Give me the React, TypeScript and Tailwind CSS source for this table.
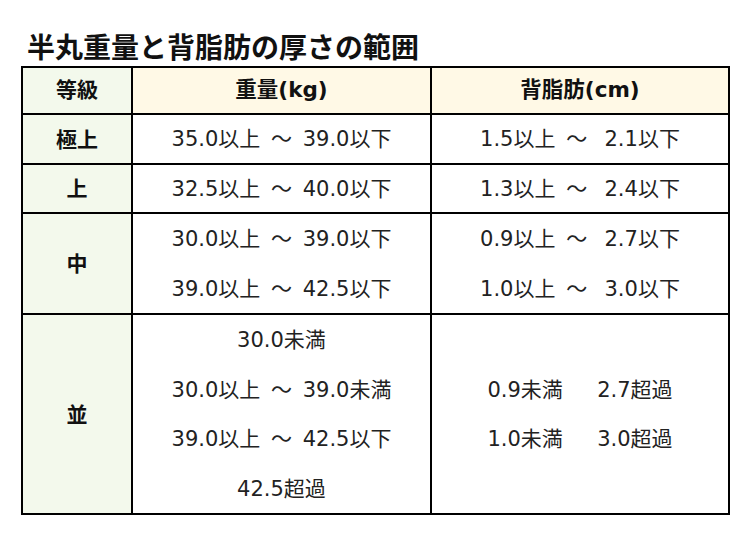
import React from "react";

const font = { fontFamily: '"DejaVu Sans", "Noto Sans CJK JP", sans-serif' };

function Text({ t }: { t: string }) {
  const parts = t.split("～");
  return (
    <>
      {parts.map((p, i) => (
        <React.Fragment key={i}>
          {i > 0 && <span className="px-[4px]">～</span>}
          {p}
        </React.Fragment>
      ))}
    </>
  );
}

function Lines({ items }: { items: string[] }) {
  return (
    <div className="flex flex-col items-center justify-center bg-white">
      {items.map((t, i) => (
        <div key={i} className="pt-[2px] leading-[47.5px] whitespace-pre text-[21px] text-[#222]">
          <Text t={t} />
        </div>
      ))}
    </div>
  );
}

function Grade({ t }: { t: string }) {
  return (
    <div className="flex items-center justify-center bg-[#f3f9ec] pt-[3px] text-[21px] font-bold text-[#111]">
      {t}
    </div>
  );
}

export default function App() {
  return (
    <div className="w-[750px] h-[536px] bg-white pl-[21px] pt-[31px]" style={font}>
      <h1
        className="pl-[6px] text-[28px] leading-[30px] font-bold text-[#111]"
        style={{ fontFamily: '"Noto Sans CJK JP", sans-serif' }}
      >
        半丸重量と背脂肪の厚さの範囲
      </h1>
      <div className="mt-[5px] grid w-[709px] grid-cols-[108px_297px_296px] grid-rows-[45px_48px_47px_99px_198px] gap-[2px] border-2 border-black bg-black">
        <div className="flex items-center justify-center bg-[#f3f9ec] text-[21px] font-bold text-[#111]">等級</div>
        <div className="flex items-center justify-center bg-[#fff9e6] text-[21.5px] font-bold text-[#111]">重量(kg)</div>
        <div className="flex items-center justify-center bg-[#fff9e6] text-[21.5px] font-bold text-[#111]">背脂肪(cm)</div>

        <Grade t="極上" />
        <Lines items={["35.0以上 ～ 39.0以下"]} />
        <Lines items={["1.5以上 ～  2.1以下"]} />

        <Grade t="上" />
        <Lines items={["32.5以上 ～ 40.0以下"]} />
        <Lines items={["1.3以上 ～  2.4以下"]} />

        <Grade t="中" />
        <Lines items={["30.0以上 ～ 39.0以下", "39.0以上 ～ 42.5以下"]} />
        <Lines items={["0.9以上 ～  2.7以下", "1.0以上 ～  3.0以下"]} />

        <Grade t="並" />
        <Lines items={["30.0未満", "30.0以上 ～ 39.0未満", "39.0以上 ～ 42.5以下", "42.5超過"]} />
        <Lines items={["0.9未満　  2.7超過", "1.0未満　  3.0超過"]} />
      </div>
    </div>
  );
}
